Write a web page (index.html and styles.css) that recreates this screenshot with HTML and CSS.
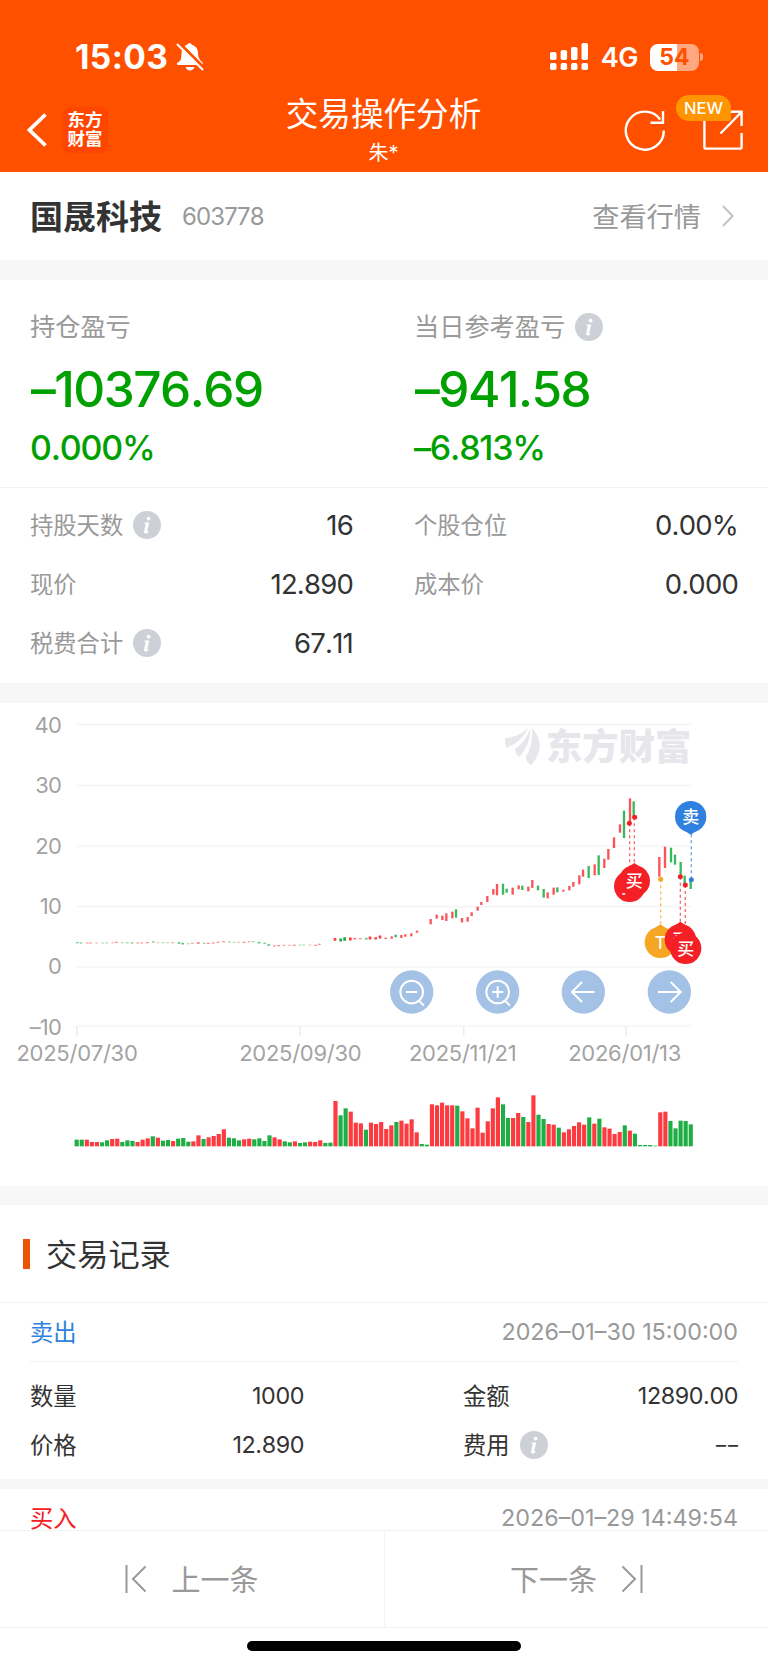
FILE: index.html
```html
<!DOCTYPE html>
<html lang="zh-CN">
	<head>
		<meta charset="utf-8">
		<meta name="viewport" content="width=device-width, initial-scale=1.0">
		<title>交易操作分析</title>
		<link rel="stylesheet" href="styles.css">
	</head>
	<body>
		<svg class="symbols">
			<symbol id="info" viewBox="0 0 28 28">
				<circle cx="14" cy="14" r="14" fill="#cdd1d7"/>
				<circle cx="15.6" cy="7.6" r="1.9" fill="#fff"/>
				<path d="M11.6 11.6h4.6l-2 8.600q0 .8 1.600 0l-.3 1q-1.600 1.700-3.500 1.200-1.300-.5-.9-2.200l1.700-7.500h-1.500z" fill="#fff"/>
			</symbol>
		</svg>

		<header class="header">
			<div class="status">
				<span class="time">15:03</span>
				<svg class="bell" width="28" height="30" viewBox="0 0 28 30">
					<path d="M4 19C6 16 5 11 6 8.500Q7 4 11 2.700Q13.500-.8 16 2.700Q21.500 4.500 22 10.500C22 15 23 17 26 20Q28 23 25 23H3Q-.2 23 1.200 21Z" fill="#fff"/>
					<path d="M9.500 25h9q-1.500 3.500-4.500 3.500T9.500 25z" fill="#fff"/>
					<path d="M3 .6 29 27" stroke="#ff5000" stroke-width="3"/>
					<path d="M1 2 27 28" stroke="#fff" stroke-width="2.200"/>
				</svg>
				<svg class="signal" width="39" height="28" viewBox="0 0 39 28" fill="#fff">
					<rect x="0" y="9" width="6.500" height="8" rx="1.800"/>
					<rect x="10.600" y="7" width="6.500" height="10" rx="1.800"/>
					<rect x="21" y="4" width="6.500" height="13" rx="1.800"/>
					<rect x="31.500" y="0" width="6.500" height="17" rx="1.800"/>
					<rect x="0" y="20" width="6.500" height="7" rx="1.800"/>
					<rect x="10.600" y="20" width="6.500" height="7" rx="1.800"/>
					<rect x="21" y="20" width="6.500" height="7" rx="1.800"/>
					<rect x="31.500" y="20" width="6.500" height="7" rx="1.800"/>
				</svg>
				<span class="network">4G</span>
				<span class="battery">54</span>
				<span class="battery-tip"></span>
			</div>
			<div class="nav">
				<div class="nav-side">
					<svg width="20" height="34" viewBox="0 0 20 34" fill="none" stroke="#fff" stroke-width="3.800"><path d="M18.500 1.500 2.500 17l16 15.500"/></svg>
					<div class="logo">东方<br>财富</div>
				</div>
				<div class="nav-title">
					<h1>交易操作分析</h1>
					<p>朱*</p>
				</div>
				<div class="nav-side nav-actions">
					<svg width="42" height="42" viewBox="0 0 42 42" fill="none" stroke="#fff" stroke-width="2.400">
						<path d="M39.800 21.500A19 19 0 1 1 36.200 10.500"/>
						<path d="M39 2V13.800H26.500"/>
					</svg>
					<div class="share">
						<svg width="40" height="40" viewBox="0 0 40 40" fill="none" stroke="#fff" stroke-width="2.400">
							<path d="M1.400 10V37.500Q1.400 38.600 2.600 38.600H37.400Q38.600 38.600 38.600 37.500V23"/>
							<path d="M27 1.800H38.600V16M38 2.500 17.500 23.500"/>
						</svg>
						<span class="new">NEW</span>
					</div>
				</div>
			</div>
		</header>

		<main>
			<section class="stock">
				<h2>国晟科技</h2>
				<span class="code">603778</span>
				<a class="quote">查看行情</a>
				<svg width="12" height="22" viewBox="0 0 12 22" fill="none" stroke="#c4c4c4" stroke-width="2.200"><path d="M1 1 10.500 11 1 21"/></svg>
			</section>

			<section class="block profit">
				<div>
					<p class="label">持仓盈亏</p>
					<p class="amount">–10376.69</p>
					<p class="percent">0.000%</p>
				</div>
				<div>
					<p class="label">当日参考盈亏 <svg class="info"><use href="#info"/></svg></p>
					<p class="amount">–941.58</p>
					<p class="percent">–6.813%</p>
				</div>
			</section>
			<section class="details">
				<div class="row"><span>持股天数</span><svg class="info"><use href="#info"/></svg><b>16</b></div>
				<div class="row"><span>个股仓位</span><b>0.00%</b></div>
				<div class="row"><span>现价</span><b>12.890</b></div>
				<div class="row"><span>成本价</span><b>0.000</b></div>
				<div class="row"><span>税费合计</span><svg class="info"><use href="#info"/></svg><b>67.11</b></div>
			</section>

			<section class="block chart">
				<!-- three units per css pixel -->
				<svg id="chart" width="768" height="483" viewBox="0 9 2304 1449">
					<g class="grid">
						<path d="M231 74H2072M231 256H2072M231 438H2072M231 620H2072M231 801H2072M231 978H2072"/>
						<path class="ticks" d="M231 978v30M900 978v30M1391 978v30M1878 978v30"/>
					</g>
					<g class="axis axis-y">
						<text x="183" y="98">40</text>
						<text x="183" y="280">30</text>
						<text x="183" y="461">20</text>
						<text x="183" y="642">10</text>
						<text x="183" y="823">0</text>
						<text x="183" y="1004">–10</text>
					</g>
					<g class="axis axis-x">
						<text x="231" y="1083">2025/07/30</text>
						<text x="901" y="1083">2025/09/30</text>
						<text x="1388" y="1083">2025/11/21</text>
						<text x="1874" y="1083">2026/01/13</text>
					</g>
					<g class="watermark">
						<path d="M1515 114Q1555 112 1585 83Q1566 126 1520 143Q1513 128 1515 114Z"/>
						<path d="M1545 147Q1578 124 1591 84Q1592 136 1557 171Q1545 160 1545 147Z"/>
						<path d="M1577 172Q1600 132 1596 84Q1644 137 1593 196Q1579 186 1577 172Z"/>
						<text x="1638" y="179">东方财富</text>
					</g>
					<g id="candles"></g>
					<g id="volumes"></g>
					<g class="guides">
						<path stroke="#f52a30" d="M1889 370V520M1903 352V490M2041 530V668M2056 555V690"/>
						<path stroke="#f5a623" d="M1982 538V675"/>
						<path stroke="#3080e0" d="M2074 403V539"/>
					</g>
					<g class="dots">
						<circle cx="1888" cy="370" r="7.500"/>
						<circle cx="1904" cy="352" r="7.500"/>
						<circle cx="2041" cy="530" r="7.500"/>
						<circle cx="2056" cy="555" r="7.500"/>
						<circle cx="1982" cy="538" r="7.500" fill="#f5a623"/>
						<circle cx="2074" cy="539" r="7.500" fill="#3080e0"/>
					</g>
					<g id="pins"></g>
					<g class="tools">
						<circle cx="1235" cy="876" r="65"/>
						<circle cx="1493" cy="876" r="65"/>
						<circle cx="1750" cy="876" r="65"/>
						<circle cx="2008" cy="876" r="65"/>
						<path d="M1269 876a34 34 0 1 0-68 0a34 34 0 1 0 68 0M1218 876h34M1256 901l16 16"/>
						<path d="M1527 876a34 34 0 1 0-68 0a34 34 0 1 0 68 0M1476 876h34M1493 859v34M1514 901l16 16"/>
						<path d="M1784 876h-68M1746 846l-30 30 30 30"/>
						<path d="M1974 876h68M2012 846l30 30-30 30"/>
					</g>
				</svg>
			</section>

			<section class="block records">
				<h3>交易记录</h3>
				<div class="record">
					<div class="record-head"><span class="sell">卖出</span><time>2026–01–30 15:00:00</time></div>
					<div class="record-body">
						<div class="row"><span>数量</span><b>1000</b></div>
						<div class="row"><span>金额</span><b>12890.00</b></div>
						<div class="row"><span>价格</span><b>12.890</b></div>
						<div class="row"><span>费用</span><svg class="info"><use href="#info"/></svg><b class="empty">––</b></div>
					</div>
				</div>
				<div class="record">
					<div class="record-head"><span class="buy">买入</span><time>2026–01–29 14:49:54</time></div>
				</div>
			</section>
		</main>

		<footer>
			<div class="pager">
				<a>
					<svg width="22" height="28" viewBox="0 0 22 28" fill="none" stroke="#999" stroke-width="2"><path d="M1.500 0V28M20.500 1.500 8 14l12.500 12.500"/></svg>
					<span>上一条</span>
				</a>
				<a>
					<span>下一条</span>
					<svg width="22" height="28" viewBox="0 0 22 28" fill="none" stroke="#999" stroke-width="2"><path d="M20.500 0V28M1.500 1.500 14 14 1.500 26.500"/></svg>
				</a>
			</div>
			<div class="home-indicator"></div>
		</footer>
		<script src="chart.js"></script>
	</body>
</html>
```
FILE: styles.css
```css
* {
	box-sizing: border-box;
	margin: 0;
	padding: 0;
}
body {
	display: flex;
	flex-direction: column;
	height: 1667px;
	overflow: hidden;
	background: #fff;
	color: #333;
	font-family: Inter, "Noto Sans CJK SC", sans-serif;
	font-weight: 400;
	font-kerning: none;
}
svg {
	display: block;
	flex: none;
}
b {
	font-weight: 400;
}
.symbols {
	position: absolute;
	width: 0;
	height: 0;
}
.info {
	width: 28px;
	height: 28px;
}

.header {
	flex: none;
	height: 172px;
	background: #ff5000;
	color: #fff;
}
.status {
	display: flex;
	align-items: center;
	height: 92px;
	padding: 22px 65px 0 75px;
}
.time {
	font-size: 33.5px;
	font-weight: 700;
	letter-spacing: .4px;
}
.bell {
	margin-left: 8px;
}
.signal {
	margin-left: auto;
}
.network {
	margin-left: 12px;
	font-size: 27px;
	font-weight: 600;
	letter-spacing: -.5px;
}
.battery {
	width: 49px;
	height: 27px;
	margin-left: 12px;
	border-radius: 8px;
	background: linear-gradient(90deg, #fff 27px, #ffa780 27px);
	color: #ff5000;
	font-size: 23px;
	font-weight: 700;
	line-height: 27px;
	text-align: center;
}
.battery-tip {
	width: 3px;
	height: 8px;
	margin-left: 1px;
	border-radius: 0 3px 3px 0;
	background: #ffa780;
}
.nav {
	display: grid;
	grid-template-columns: 1fr auto 1fr;
	height: 80px;
}
.nav-side {
	display: flex;
	align-items: center;
	height: 75px;
	padding-left: 27px;
}
.logo {
	width: 46px;
	height: 46px;
	margin-left: 15px;
	padding: 3px 0;
	border-radius: 8px;
	background: #ff4600;
	font-size: 17.5px;
	font-weight: 700;
	line-height: 19px;
	text-align: center;
}
.nav-title {
	padding-right: 1px;
	text-align: center;
}
.nav-title h1 {
	font-size: 32.6px;
	font-weight: 400;
	line-height: 44px;
}
.nav-title p {
	font-size: 20px;
	line-height: 34px;
}
.nav-actions {
	justify-content: flex-end;
	padding: 0 25px 0 0;
}
.share {
	position: relative;
	margin-left: 37px;
}
.new {
	position: absolute;
	top: -15px;
	left: -27px;
	width: 55px;
	height: 26px;
	border-radius: 13px 13px 2px 13px;
	background: #ff9500;
	font-size: 16.5px;
	font-weight: 500;
	line-height: 26px;
	text-align: center;
}

main {
	flex: 1;
	overflow: hidden;
}
.block {
	border-top: 20px solid #f7f7f7;
}
.stock {
	display: flex;
	align-items: center;
	height: 88px;
	padding: 0 34px 0 30px;
}
.stock h2 {
	padding-bottom: 3px;
	font-size: 33px;
	font-weight: 700;
}
.code {
	margin-left: 20px;
	color: #999;
	font-size: 24px;
	letter-spacing: -.85px;
}
.quote {
	margin-left: auto;
	margin-right: 21px;
	padding-bottom: 3px;
	color: #999;
	font-size: 27.2px;
}

.profit {
	display: grid;
	grid-template-columns: 384px 384px;
	height: 227px;
	padding: 28px 0 0 30px;
}
.label {
	display: flex;
	align-items: center;
	gap: 10px;
	color: #999;
	font-size: 25.2px;
	line-height: 38px;
}
.amount {
	color: #00a000;
	font-size: 49.5px;
	font-weight: 550;
	letter-spacing: -1.5px;
	line-height: 87px;
	text-indent: 1px;
}
.percent {
	color: #00a000;
	font-size: 34px;
	font-weight: 500;
	letter-spacing: -1.2px;
	line-height: 30px;
}
.row {
	display: flex;
	align-items: center;
}
.row span {
	padding-bottom: 2px;
}
.row .info {
	margin-left: 10px;
}
.row b {
	margin-left: auto;
	letter-spacing: -.4px;
}
.details {
	display: grid;
	grid-template-columns: 323px 324px;
	grid-auto-rows: 58.7px;
	column-gap: 61px;
	height: 196px;
	padding: 8px 30px 0;
	border-top: 1px solid #f2f2f2;
	color: #999;
	font-size: 23.3px;
}
.details b {
	color: #333;
	font-size: 27.5px;
	letter-spacing: -.8px;
}

.chart {
	height: 503px;
}
.grid {
	fill: none;
	stroke: #f5f5f5;
	stroke-width: 5;
}
.ticks {
	stroke: #eee;
}
.axis {
	fill: #a3a3a3;
	font-size: 66px;
}
.axis-y {
	letter-spacing: -2.5px;
	text-anchor: end;
}
.axis-x {
	letter-spacing: -.8px;
	text-anchor: middle;
}
.watermark {
	fill: #e6e6eb;
	font-size: 109px;
	font-weight: 900;
}
.guides {
	stroke-width: 4;
	stroke-dasharray: 9 9;
	opacity: .7;
}
.dots {
	fill: #f52025;
}
.tools {
	fill: #a4c2e5;
}
.tools path {
	fill: none;
	stroke: #fff;
	stroke-width: 6;
}
.pin {
	fill: #fff;
	font-size: 51px;
	font-weight: 500;
	text-anchor: middle;
}

.records {
	border-top-width: 19px;
}
.records h3 {
	display: flex;
	align-items: center;
	height: 97px;
	padding: 0 22px 2px;
	font-size: 31.2px;
	font-weight: 400;
}
.records h3::before {
	content: "";
	width: 7px;
	height: 30px;
	margin: 2px 16px 0 1px;
	background: #e95504;
}
.record {
	border-top: 1px solid #f2f2f2;
	font-size: 23.3px;
}
.record + .record {
	border-top: 10px solid #f7f7f7;
}
.record-head {
	display: flex;
	align-items: center;
	justify-content: space-between;
	height: 59px;
	margin: 0 30px;
	padding-bottom: 1px;
	border-bottom: 1px solid #f2f2f2;
}
.record-head span {
	padding-bottom: 1px;
}
.record-head time {
	color: #999;
}
.sell {
	color: #3080e0;
}
.buy {
	color: #f52025;
}
.record-body {
	display: grid;
	grid-template-columns: 274px 275px;
	grid-auto-rows: 49px;
	column-gap: 159px;
	padding: 9px 30px 10px;
}
.row .empty {
	margin-right: -2px;
	font-size: 20px;
	letter-spacing: 2px;
}

footer {
	flex: none;
	height: 137px;
	background: #fff;
}
.pager {
	display: grid;
	grid-template-columns: 1fr 1fr;
	height: 98px;
	border: solid #f2f2f2;
	border-width: 1px 0;
}
.pager a {
	display: flex;
	align-items: center;
	justify-content: center;
	gap: 24px;
	color: #999;
	font-size: 29px;
}
.pager span {
	padding-bottom: 3px;
}
.pager a + a {
	border-left: 1px solid #f2f2f2;
}
.home-indicator {
	width: 274px;
	height: 10px;
	margin: 13px auto 0;
	border-radius: 5px;
	background: #000;
}
```
FILE: chart.js
```js
const red = "#fc3b41";
const green = "#1fae46";

// quiet period before the rise: x, middle, thickness
const flat = `g232 728 4,g243 729 4,r262 729 3,r272 729 3,r290 729 2,g308 729 2,g320 729 2,r338 728 2,r349 727 4,
g367 728 2,g382 728 3,g396 729 4,r413 729 3,r425 729 3,r442 728 4,g460 726 4,r474 728 2,g490 728 2,g503 728 2,
r518 728 3,g537 729 5,g548 731 5,g565 731 2,r577 730 3,r595 729 5,g613 730 3,r625 730 4,r640 729 4,r654 727 4,
r671 725 4,g688 726 3,g702 727 2,r716 727 2,r732 727 4,r747 725 3,g759 725 3,g777 728 5,g794 730 4,g806 735 5,
r823 738 4,r836 737 4,r852 736 3,r868 736 2,r883 736 4,g900 735 2,g911 735 2,r930 735 2,r947 736 4,r958 733 4,
r1005 718 8,g1022 720 9,g1034 717 11,r1051 717 9,r1064 716 5,r1081 716 4,g1099 716 5,r1110 714 9,r1127 715 7,r1140 711 9`;

// x, high, low
const candles = `r1157 713 717,r1175 709 716,g1187 704 712,r1204 705 714,r1216 703 710,r1234 700 709,r1251 692 698,
r1292 657 673,r1310 644 656,r1327 647 660,r1339 640 663,r1357 635 655,g1368 628 653,r1386 654 667,r1403 651 665,
r1415 637 648,r1433 620 632,r1444 606 615,r1462 588 606,r1480 567 584,r1491 552 586,g1509 551 584,g1520 566 578,
r1538 563 584,r1556 556 568,g1567 557 570,r1585 560 574,r1597 540 564,g1614 557 571,g1631 567 593,r1643 577 595,
r1661 563 584,g1672 562 577,r1690 569 575,r1708 558 571,r1720 546 560,r1738 526 553,r1749 509 530,g1766 498 534,
r1784 493 526,g1796 466 525,r1813 476 504,r1825 447 479,r1842 412 444,r1860 373 398,g1872 332 414,r1890 295 370,
g1901 304 350,r1978 471 530,r1995 440 504,g2013 443 487,g2025 464 494,g2042 486 530,g2054 527 552,g2072 540 567`;

const volumes = `g20 g20 r20 r13 r13 g12 g18 r22 r23 g13 g18 g16 r13 r20 r24 g30 r26 g17 g19 r16 g23 g25 g14 r15 r33
g22 r27 r31 r37 r51 g26 g24 g18 r21 r23 g21 g24 g16 g33 r27 r21 g15 g12 r15 g10 g12 r14 r13 r18 g10 g11
r136 g93 g114 r104 r71 r69 g50 r71 r67 r73 r52 r63 g73 r77 r68 r81 r42 g7 g5 r126 r123 r131 r123 r123 g122
r105 r84 r54 r116 r41 r75 r114 r147 g126 g85 r85 r100 g88 r73 r153 g95 g82 r67 r65 g56 r42 r51 r61 r72 r65
g87 r68 g83 r57 r53 r37 r43 g63 r47 g38 g4 g4 g4 g2 r102 r104 g76 g54 g77 g76 g66`;

const pins = [
	{ x: 1889, y: 559, color: "#f52025", text: "买" },
	{ x: 1903, y: 543, color: "#f52025", text: "买" },
	{ x: 1981, y: 727, color: "#f5a623", text: "T" },
	{ x: 2041, y: 719, color: "#f52025", text: "买" },
	{ x: 2057, y: 745, color: "#f52025", text: "买" },
	{ x: 2072, y: 350, color: "#3080e0", text: "卖", down: true },
];

function bar(x, y, width, height, kind, opacity = 1) {
	return `<rect x="${x - width / 2}" y="${y}" width="${width}" height="${height}" fill="${kind === "r" ? red : green}" opacity="${opacity}"/>`;
}

function parse(text) {
	return text.split(",").map(item => {
		item = item.trim();
		return [item[0], ...item.slice(1).split(" ").map(Number)];
	});
}

let html = "";
for (const [kind, x, middle, size] of parse(flat))
	html += bar(x, middle - Math.max(size, 4) / 2, 8, Math.max(size, 4), kind, Math.min(1, .1 + size * .12));
for (const [kind, x, high, low] of parse(candles))
	html += bar(x, high, 7, low - high, kind, .88);
document.getElementById("candles").innerHTML = html;

document.getElementById("volumes").innerHTML = volumes.split(/\s+/).map((item, i) => {
	const height = Number(item.slice(1));
	return bar(230 + i * 15.225, 1339 - height, 12.5, height, item[0]);
}).join("");

document.getElementById("pins").innerHTML = pins.map(({ x, y, color, text, down }) => {
	const s = down ? 1 : -1;
	return `<g class="pin"><circle cx="${x}" cy="${y}" r="47" fill="${color}"/>
		<path d="M${x - 36} ${y + 30 * s}L${x} ${y + 54 * s}L${x + 36} ${y + 30 * s}Z" fill="${color}"/>
		<text x="${x}" y="${y + 19}">${text}</text></g>`;
}).join("");
```
